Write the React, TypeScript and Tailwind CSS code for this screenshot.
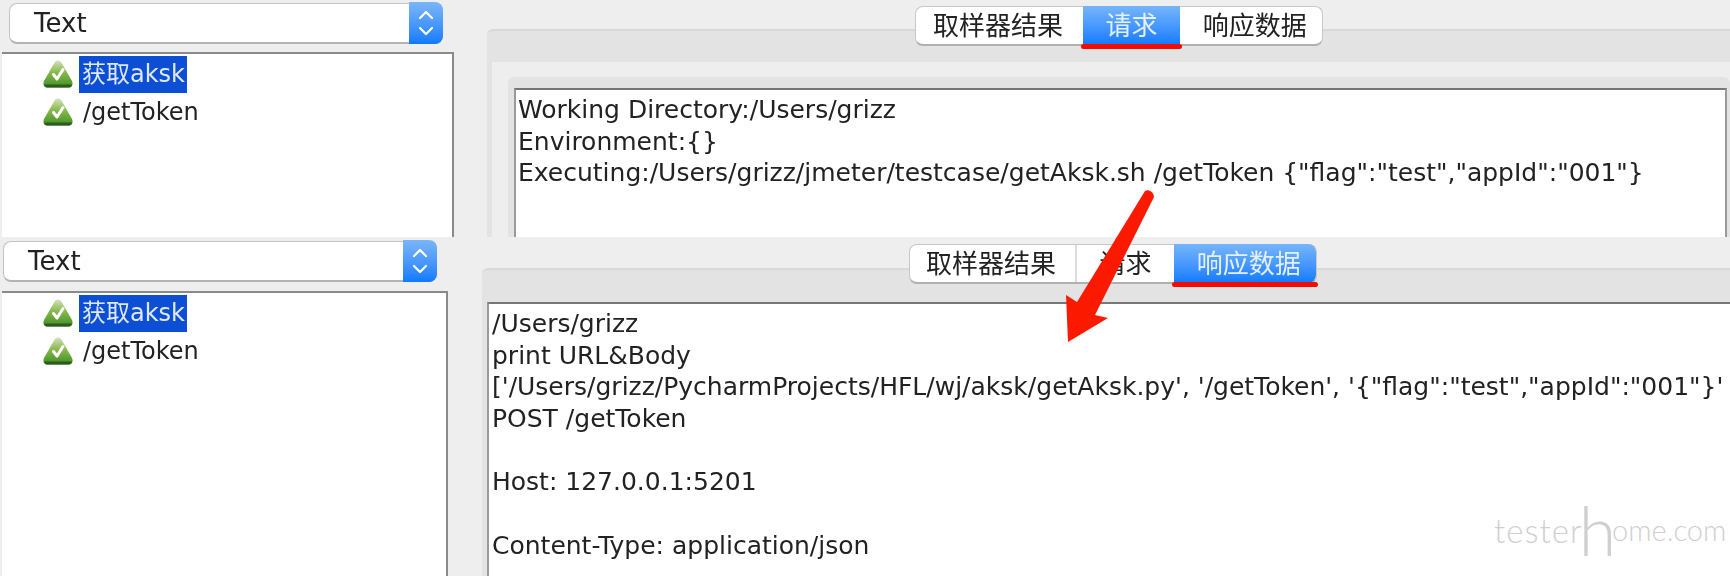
const uiFont = { fontFamily: '"DejaVu Sans", "Noto Sans CJK SC", sans-serif' }

function ResultIcon() {
  return (
    <svg width="30" height="28" viewBox="0 0 30 28" className="shrink-0">
      <defs>
        <linearGradient id="tri" x1="0" y1="0" x2="0" y2="1">
          <stop offset="0" stopColor="#d3e2bd" />
          <stop offset="0.4" stopColor="#8fbc55" />
          <stop offset="1" stopColor="#3f8f1e" />
        </linearGradient>
      </defs>
      <path d="M15 0.5 C13 0.5 12 1.5 11 3.5 L1 21 C-0.5 25 1 27.5 4 27.5 L26 27.5 C29 27.5 30.5 25 29 21 L19 3.5 C18 1.5 17 0.5 15 0.5 Z" fill="url(#tri)" />
      <path d="M1 24.5 C1.5 26.5 3 27.5 4 27.5 L26 27.5 C27 27.5 28.5 26.5 29 24.5 Z" fill="#2c5a22" />
      <path d="M10.5 14.5 L14 19 L20 9.5" fill="none" stroke="#fff" strokeWidth="3" strokeLinecap="round" strokeLinejoin="round" />
    </svg>
  )
}

function SelectBox() {
  return (
    <div className="flex h-[41px] w-[434px] items-stretch rounded-[8px] border border-[#c4c4c4] border-b-[2px] border-b-[#b4b4b4] bg-white">
      <div className="flex flex-1 items-center pl-[24px] pt-[2px] text-[26px] text-[#222]">Text</div>
      <div className="flex w-[34px] -my-[2px] -mr-px items-center justify-center rounded-r-[8px] bg-gradient-to-b from-[#7ab6f8] to-[#0a7aff]">
        <svg width="16" height="26" viewBox="0 0 16 26" fill="none" stroke="#fff" strokeWidth="2.2" strokeLinecap="round" strokeLinejoin="round">
          <path d="M2 8 L8 2 L14 8" />
          <path d="M2 18 L8 24 L14 18" />
        </svg>
      </div>
    </div>
  )
}

function Tree() {
  return (
    <div className="flex flex-col pl-[41px] pt-px text-[24px] leading-[37px] text-[#222]">
      <div className="flex h-[38px] items-center gap-[6px]">
        <ResultIcon />
        <span className="w-[108px] whitespace-nowrap bg-[#0d4fd4] px-[3px] text-[#dfe9fb]">获取aksk</span>
      </div>
      <div className="flex h-[38px] items-center gap-[6px]">
        <ResultIcon />
        <span className="px-[4px]">/getToken</span>
      </div>
    </div>
  )
}

function Tabs({ active, className }: { active: number; className: string }) {
  const items = [
    { label: '取样器结果', width: 'w-[168px] pr-[3px]' },
    { label: '请求', width: 'w-[97px]' },
    { label: '响应数据', width: 'w-[143px] pl-[8px]' },
  ]
  return (
    <div className={'relative z-10 flex h-[40px] w-[408px] rounded-[8px] border border-[#c8c8c8] border-b-[2px] border-b-[#b0b0b0] bg-white text-[26px] text-[#222] ' + className}>
      {items.map((item, i) => (
        <div
          key={item.label}
          className={
            'relative flex items-center justify-center pt-[3px] ' + item.width + ' ' +
            (i === active
              ? '-my-px bg-gradient-to-b from-[#75b5fa] to-[#0a7aff] text-[#e4f0ff] ' + (i === 2 ? 'rounded-r-[8px]' : '')
              : i === 0 && active === 2 ? 'border-r-2 border-[#dcdcdc]' : '')
          }
        >
          {item.label}
          {i === active && <div className="absolute -bottom-[4px] -left-[2px] -right-[2px] h-[5px] rounded-full bg-[#f70a00]" />}
        </div>
      ))}
    </div>
  )
}

export default function App() {
  const lineClass = 'h-[31.7px] whitespace-nowrap'
  return (
    <div className="relative h-[576px] w-[1730px] overflow-hidden bg-white leading-[31.7px] text-[#222]" style={uiFont}>
      <div className="blur-[0.4px]">
        {/* upper window */}
        <div className="flex h-[237px] overflow-hidden bg-[#eeeeee]">
          <div className="flex w-[454px] shrink-0 flex-col pt-[3px]">
            <div className="pl-[9px]"><SelectBox /></div>
            <div className="ml-[2px] mt-[8px] flex-1 border-r-2 border-t-2 border-[#8a8a8a] bg-white"><Tree /></div>
          </div>
          <div className="ml-[33px] flex flex-1 flex-col pt-[6px]">
            <Tabs active={1} className="ml-[428px] -mb-[17px]" />
            <div className="flex flex-1 flex-col rounded-tl-[6px] border-t-2 border-[#d8d8d8] bg-[#e3e3e3] pl-[5px] pt-[31px]">
              <div className="flex flex-1 flex-col bg-[#eeeeee] pl-[16px] pt-[15px]">
                <div className="flex flex-1 flex-col rounded-t-[6px] bg-[#e3e3e3] pl-[6px] pr-[3px] pt-[11px]">
                  <div className="flex-1 border-x-2 border-t-2 border-x-[#9a9a9a] border-t-[#777] bg-white pl-[2px] pt-[4px] text-[25px]">
                    <div className={lineClass}>Working Directory:/Users/grizz</div>
                    <div className={lineClass}>Environment:{'{}'}</div>
                    <div className={lineClass}>Executing:/Users/grizz/jmeter/testcase/getAksk.sh /getToken {'{"flag":"test","appId":"001"}'}</div>
                  </div>
                </div>
              </div>
            </div>
          </div>
        </div>

        {/* lower window */}
        <div className="flex h-[339px] overflow-hidden bg-[#eeeeee]">
          <div className="flex w-[448px] shrink-0 flex-col pt-[4px]">
            <div className="pl-[3px]"><SelectBox /></div>
            <div className="ml-[2px] mt-[9px] flex-1 border-r-2 border-t-2 border-[#8a8a8a] bg-white"><Tree /></div>
          </div>
          <div className="ml-[34px] flex flex-1 flex-col pt-[7px]">
            <Tabs active={2} className="ml-[427px] -mb-[16px]" />
            <div className="flex flex-1 flex-col rounded-tl-[6px] border-t-2 border-[#d8d8d8] bg-[#e3e3e3] pl-[5px] pt-[32px]">
              <div className="flex-1 overflow-hidden border-l-2 border-t-2 border-l-[#9a9a9a] border-t-[#777] bg-white pl-[3px] pt-[4px] text-[25px]">
                <div className={lineClass}>/Users/grizz</div>
                <div className={lineClass}>print URL&amp;Body</div>
                <div className={lineClass}>['/Users/grizz/PycharmProjects/HFL/wj/aksk/getAksk.py', '/getToken', '{'{"flag":"test","appId":"001"}'}'</div>
                <div className={lineClass}>POST /getToken</div>
                <div className={lineClass} />
                <div className={lineClass}>Host: 127.0.0.1:5201</div>
                <div className={lineClass} />
                <div className={lineClass}>Content-Type: application/json</div>
              </div>
            </div>
          </div>
        </div>
      </div>

      {/* red annotation arrow */}
      <svg className="absolute left-[1060px] top-[185px]" width="100" height="165" viewBox="0 0 100 165">
        <path d="M85 6 C88 4 94 7 94 12 L35 130 L48 133 L8 157 L6 110 L17 117 Z" fill="#fb1a00" />
      </svg>

      {/* watermark */}
      <div className="absolute left-[1494px] top-[498px] flex items-end whitespace-nowrap text-[33px] leading-[64px] text-[#cfcfcf]" style={{ fontFamily: 'Lato, sans-serif', fontWeight: 300 }}>
        <span className="tracking-[1px]">tester</span>
        <span className="-mx-[4px] text-[68px]">h</span>
        <span className="text-[29px]">ome.com</span>
      </div>
    </div>
  )
}
